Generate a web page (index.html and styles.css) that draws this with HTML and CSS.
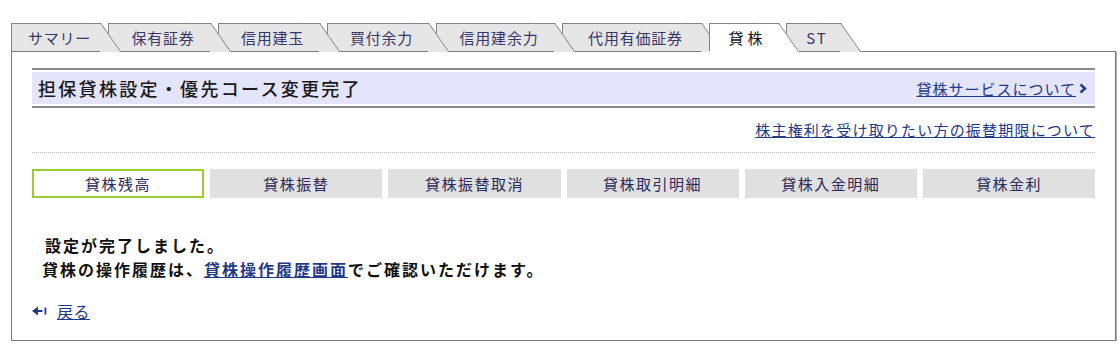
FILE: index.html
```html
<!DOCTYPE html>
<html lang="ja">
<head>
  <meta charset="UTF-8">
  <meta name="viewport" content="width=device-width, initial-scale=1.0">
  <title>貸株 担保貸株設定・優先コース変更完了</title>
  <link rel="stylesheet" href="styles.css">
</head>
<body>
  <div class="page">
    <div class="tabs">
      <a class="tab" href="#">サマリー</a>
      <a class="tab" href="#">保有証券</a>
      <a class="tab" href="#">信用建玉</a>
      <a class="tab" href="#">買付余力</a>
      <a class="tab" href="#">信用建余力</a>
      <a class="tab" href="#">代用有価証券</a>
      <a class="tab active" href="#">貸株</a>
      <a class="tab" href="#">ST</a>
    </div>

    <div class="panel">
      <div class="title-bar">
        <div class="title-inner">
          <h1>担保貸株設定・優先コース変更完了</h1>
          <a class="more" href="#">貸株サービスについて</a>
          <svg class="chevron" width="8" height="11" viewBox="0 0 8 11">
            <path d="M1.5 1.5 L6 5.5 L1.5 9.5" fill="none" stroke="#1f3a86" stroke-width="2.4"/>
          </svg>
        </div>
      </div>

      <div class="notice-link">
        <a href="#">株主権利を受け取りたい方の振替期限について</a>
      </div>

      <div class="subnav">
        <a class="sub-item current" href="#">貸株残高</a>
        <a class="sub-item" href="#">貸株振替</a>
        <a class="sub-item" href="#">貸株振替取消</a>
        <a class="sub-item" href="#">貸株取引明細</a>
        <a class="sub-item" href="#">貸株入金明細</a>
        <a class="sub-item" href="#">貸株金利</a>
      </div>

      <div class="message">
        <p class="first">設定が完了しました。</p>
        <p>貸株の操作履歴は、<a href="#">貸株操作履歴画面</a>でご確認いただけます。</p>
      </div>

      <div class="back">
        <svg width="15" height="10" viewBox="0 0 15 10">
          <path d="M0 5 L6 0.5 L6 9.5 Z" fill="#1f3a86"/>
          <rect x="5" y="4" width="5.5" height="2" fill="#1f3a86"/>
          <rect x="12.5" y="1.5" width="1.8" height="7" fill="#1f3a86"/>
        </svg>
        <a href="#">戻る</a>
      </div>
    </div>
  </div>
</body>
</html>
```

FILE: styles.css
```css
body {
  margin: 0;
  padding: 0;
  background: #fff;
  font-family: "Noto Sans CJK JP", "Noto Sans", sans-serif;
  color: #111;
}
a {
  color: #1f3a86;
}
.page {
  padding: 23px 4px 0 11px;
}

/* tabs */
.tabs {
  display: flex;
  position: relative;
  z-index: 1;
  height: 28px;
}
.tab {
  position: relative;
  box-sizing: border-box;
  height: 28px;
  line-height: 27px;
  margin-right: 8px;
  padding-left: 7px;
  text-align: center;
  background: #e6e6e6;
  border-top: 1px solid #858585;
  border-left: 1px solid #858585;
  color: #37376b;
  font-size: 15px;
  letter-spacing: 0.8px;
  text-decoration: none;
}
.tab::after {
  content: '';
  position: absolute;
  z-index: -1;
  top: -1px;
  left: calc(100% - 20px);
  width: 20px;
  height: 28px;
  background: #e6e6e6;
  border-top: 1px solid #858585;
  border-right: 1px solid #858585;
  transform: skewX(35deg);
  transform-origin: top left;
}
.tab:nth-child(1) { width: 89px; z-index: 8; }
.tab:nth-child(2) { width: 102px; z-index: 7; }
.tab:nth-child(3) { width: 101px; z-index: 6; }
.tab:nth-child(4) { width: 101px; z-index: 5; }
.tab:nth-child(5) { width: 118px; z-index: 4; }
.tab:nth-child(6) { width: 139px; z-index: 3; }
.tab:nth-child(7) { width: 69px; z-index: 2; letter-spacing: 4px; }
.tab:nth-child(8) { width: 54px; z-index: 1; letter-spacing: 2px; }
.tab.active {
  z-index: 10;
  background: #fff;
  color: #111;
  box-shadow: 0 1px 0 #fff;
}
.tab.active::after {
  background: #fff;
  box-shadow: 0 1px 0 #fff;
}

/* panel */
.panel {
  border: 1px solid #7a7a7a;
  box-shadow: 1px 1px 0 #a8a8a8;
  padding: 16px 20px 17px;
}
.title-bar {
  border-top: 2px solid #8c8c8c;
  border-bottom: 2px solid #8c8c8c;
  padding: 2px 0;
}
.title-inner {
  display: flex;
  align-items: center;
  height: 32px;
  padding: 0 8px 0 6px;
  background: #e4e4fa;
}
.title-inner h1 {
  flex: 1;
  margin: 0;
  font-size: 18px;
  font-weight: 500;
  letter-spacing: 2.3px;
  color: #1a1a1a;
}
.more {
  font-size: 15px;
  letter-spacing: 1px;
}
.chevron {
  margin-left: 3px;
}
.notice-link {
  margin-top: 11px;
  padding-bottom: 11px;
  line-height: 22px;
  text-align: right;
  font-size: 15px;
  letter-spacing: 1.2px;
  border-bottom: 1px dotted #b8b8b8;
}

/* sub navigation */
.subnav {
  display: grid;
  grid-template-columns: repeat(6, 1fr);
  gap: 6px;
  margin-top: 16px;
}
.sub-item {
  box-sizing: border-box;
  height: 29px;
  line-height: 29px;
  text-align: center;
  background: #e0e0e0;
  color: #2a2a5a;
  font-size: 15px;
  letter-spacing: 1.5px;
  text-decoration: none;
}
.sub-item.current {
  background: #fff;
  border: 2px solid #9acd32;
  line-height: 25px;
}

/* message */
.message {
  margin-top: 35px;
  padding-left: 10px;
  font-size: 16px;
  font-weight: bold;
  letter-spacing: 2px;
  line-height: 24px;
}
.message p {
  margin: 0;
}
.message p.first {
  padding-left: 3px;
}
.back {
  display: flex;
  align-items: center;
  gap: 10px;
  margin-top: 18px;
  line-height: 24px;
  font-size: 16px;
  letter-spacing: 0.5px;
}
```
